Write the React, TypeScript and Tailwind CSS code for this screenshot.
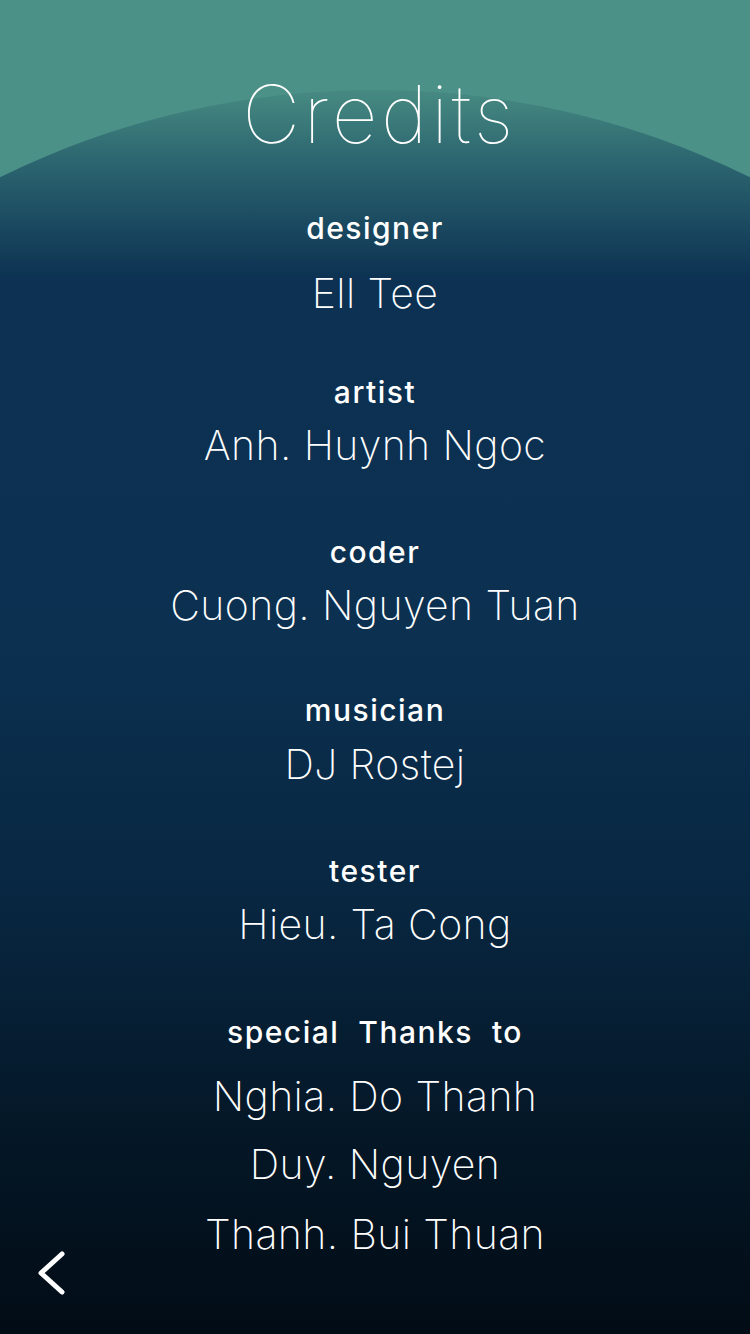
import React from "react";

const font = { fontFamily: "Inter, 'Noto Sans', sans-serif" };

function Label({ text, mt }: { text: string; mt: string }) {
  return (
    <div className={`${mt} text-[30px] leading-none font-medium tracking-[1.5px] whitespace-pre`}>{text}</div>
  );
}

function Name({ text, mt }: { text: string; mt: string }) {
  return (
    <div className={`${mt} text-[41px] leading-none font-extralight tracking-[0.4px] whitespace-pre`}>{text}</div>
  );
}

export default function App() {
  return (
    <div
      className="relative w-[750px] h-[1334px] overflow-hidden bg-[#4b9188] text-white"
      style={font}
    >
      <div className="absolute left-[-475px] top-[90px] w-[1700px] h-[1700px] rounded-full bg-[linear-gradient(to_bottom,#478a82_0px,#2c6670_70px,#0c3152_190px,#0b3050_560px,#082640_820px,#041625_1060px,#020c16_1244px)]" />
      <div className="relative flex flex-col items-center">
        <h1 className="mt-[74px] text-[80px] leading-none font-thin tracking-[3.5px] pl-[9px]">Credits</h1>
        <Label text="designer" mt="mt-[59px]" />
        <Name text="Ell Tee" mt="mt-[30px]" />
        <Label text="artist" mt="mt-[63px]" />
        <Name text="Anh. Huynh Ngoc" mt="mt-[18px]" />
        <Label text="coder" mt="mt-[71px]" />
        <Name text="Cuong. Nguyen Tuan" mt="mt-[18px]" />
        <Label text="musician" mt="mt-[69px]" />
        <Name text="DJ Rostej" mt="mt-[19px]" />
        <Label text="tester" mt="mt-[71px]" />
        <Name text="Hieu. Ta Cong" mt="mt-[18px]" />
        <Label text="special  Thanks  to" mt="mt-[72px]" />
        <Name text="Nghia. Do Thanh" mt="mt-[29px]" />
        <Name text="Duy. Nguyen" mt="mt-[27px]" />
        <Name text="Thanh. Bui Thuan" mt="mt-[29px]" />
      </div>
      <button className="absolute left-[30px] top-[1243px] w-[40px] h-[60px]" aria-label="back">
        <svg width="40" height="60" viewBox="0 0 40 60" fill="none">
          <path d="M32 11 L11 30 L32 49" stroke="white" strokeWidth="5" strokeLinecap="round" strokeLinejoin="round" />
        </svg>
      </button>
    </div>
  );
}
